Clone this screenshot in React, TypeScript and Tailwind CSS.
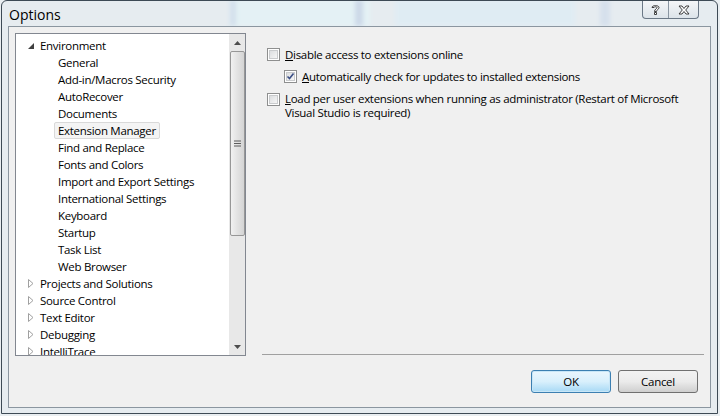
import React from 'react';

const envChildren = [
  'General',
  'Add-in/Macros Security',
  'AutoRecover',
  'Documents',
  'Extension Manager',
  'Find and Replace',
  'Fonts and Colors',
  'Import and Export Settings',
  'International Settings',
  'Keyboard',
  'Startup',
  'Task List',
  'Web Browser',
];

const topLevel = ['Projects and Solutions', 'Source Control', 'Text Editor', 'Debugging', 'IntelliTrace'];

const ExpandedArrow = () => (
  <svg width="6" height="6" viewBox="0 0 6 6" className="block">
    <path d="M6 0 L6 6 L0 6 Z" fill="#404040" />
  </svg>
);

const CollapsedArrow = () => (
  <svg width="6" height="9" viewBox="0 0 6 9" className="block">
    <path d="M0.5 0.5 L5 4.5 L0.5 8.5 Z" fill="#fff" stroke="#a0a0a0" />
  </svg>
);

const CheckBox = ({ checked }: { checked?: boolean }) => (
  <span className="relative flex h-[13px] w-[13px] shrink-0 items-center justify-center border border-[#8e8f8f] bg-white">
    <span className="h-[9px] w-[9px] border border-[#c9cbcd] bg-gradient-to-br from-[#dcdee0] to-[#f6f6f6]" />
    {checked && (
      <svg width="9" height="9" viewBox="0 0 9 9" className="absolute left-[1px] top-[1px]">
        <path d="M1.5 4.5 L3.5 6.5 L7.5 1.5" fill="none" stroke="#3b4f85" strokeWidth="1.6" />
      </svg>
    )}
  </span>
);

const TreeRow = ({ children, indent, arrow, selected }: { children: React.ReactNode; indent: number; arrow?: 'open' | 'closed'; selected?: boolean }) => (
  <div className="flex h-[17px] items-center" style={{ paddingLeft: indent }}>
    {arrow && <span className="mr-[6px] flex w-[6px] items-center">{arrow === 'open' ? <ExpandedArrow /> : <CollapsedArrow />}</span>}
    <span className={selected ? 'ml-[-4px] rounded-[2px] border border-[#d9d9d9] bg-[#f4f4f4] px-[3px] leading-[15px]' : 'leading-[17px]'}>{children}</span>
  </div>
);

const App: React.FC = () => {
  return (
    <div
      className="relative h-[416px] w-[720px] overflow-hidden bg-white text-[11.5px] tracking-[-0.3px] text-black"
      style={{ fontFamily: '"Segoe UI", "Open Sans", Lato, sans-serif' }}
    >
      {/* glass background behind the frame */}
      <div className="absolute inset-0 bg-[#e9eef1]" />
      <div className="absolute left-[230px] top-0 h-[26px] w-[140px] bg-[#e3fbfd] blur-[2px]" />
      <div className="absolute left-[230px] top-0 h-[26px] w-[6px] bg-[#b8cde4] blur-[2px]" />
      <div className="absolute left-[355px] top-0 h-[26px] w-[8px] bg-[#a8bddb] blur-[2px]" />
      <div className="absolute left-[395px] top-0 h-[26px] w-[180px] bg-[#d8eef8] blur-[2px]" />
      <div className="absolute left-[600px] top-0 h-[26px] w-[10px] bg-[#c0d0e6] blur-[2px]" />

      {/* window frame */}
      <div className="relative mx-[1px] flex h-[414px] w-[717px] flex-col rounded-t-[6px] border border-[#3d4a55] bg-[#e4ebf0]/60">
        <div className="flex h-[25px] items-start">
          <span className="ml-[7px] mt-[3px] text-[14px] tracking-normal text-black">Options</span>
          <div className="ml-auto mr-[18px] flex h-[18px] overflow-hidden rounded-b-[4px] border border-t-0 border-[#6b7886] bg-gradient-to-b from-[#f4f6f8] to-[#dde4ea]">
            <span className="flex w-[26px] items-center justify-center border-r border-[#8a96a2]">
              <svg width="9" height="12" viewBox="0 0 9 12">
                <path d="M1 3.5 C1 1 8 1 8 3.5 C8 5.5 5.5 5.5 5.5 7.5 L3.5 7.5 C3.5 5 6 5 6 3.5 C6 2.5 3 2.5 3 3.5 Z M3.5 8.5 H5.5 V10.5 H3.5 Z" fill="#fff" stroke="#2b2b2b" strokeWidth="0.9" />
              </svg>
            </span>
            <span className="flex w-[29px] items-center justify-center">
              <svg width="12" height="10" viewBox="0 0 12 10">
                <path d="M1 1 H4 L6 3.5 L8 1 H11 L7.7 5 L11 9 H8 L6 6.5 L4 9 H1 L4.3 5 Z" fill="#fff" stroke="#2b2b2b" strokeWidth="0.9" />
              </svg>
            </span>
          </div>
        </div>

        {/* client area */}
        <div className="mx-[6px] flex h-[382px] flex-col border border-[#8b96a0] bg-[#f0f0f0] px-[6px] pt-[6px]">
          <div className="flex">
            {/* tree */}
            <div className="relative flex h-[323px] w-[231px] overflow-hidden border border-[#828790] bg-white">
              <div className="flex-1 overflow-hidden pt-[3px]">
                <TreeRow indent={12} arrow="open">Environment</TreeRow>
                {envChildren.map((c) => (
                  <TreeRow key={c} indent={42} selected={c === 'Extension Manager'}>
                    {c}
                  </TreeRow>
                ))}
                {topLevel.map((c) => (
                  <TreeRow key={c} indent={12} arrow="closed">
                    {c}
                  </TreeRow>
                ))}
              </div>
              {/* scrollbar */}
              <div className="flex w-[16px] flex-col items-center bg-[#e8e8e8]">
                <div className="flex h-[17px] w-full items-center justify-center">
                  <svg width="7" height="4" viewBox="0 0 7 4">
                    <path d="M0 4 L3.5 0 L7 4 Z" fill="#4d4d4d" />
                  </svg>
                </div>
                <div className="flex h-[185px] w-[15px] items-center justify-center rounded-[2px] border border-[#979797] bg-gradient-to-r from-[#f1f1f1] via-[#e2e2e2] to-[#d4d4d4]">
                  <svg width="7" height="7" viewBox="0 0 7 7">
                    <path d="M0 1 H7 M0 3.5 H7 M0 6 H7" stroke="#5d5d5d" strokeWidth="1" />
                  </svg>
                </div>
                <div className="flex-1" />
                <div className="flex h-[17px] w-full items-center justify-center">
                  <svg width="7" height="4" viewBox="0 0 7 4">
                    <path d="M0 0 L3.5 4 L7 0 Z" fill="#4d4d4d" />
                  </svg>
                </div>
              </div>
            </div>

            {/* options */}
            <div className="ml-[16px] flex h-[322px] flex-1 flex-col border-b border-[#a0a0a0] pl-[5px] pt-[13px]">
              <label className="flex items-center gap-[5px]">
                <CheckBox />
                <span className="first-letter:underline">Disable access to extensions online</span>
              </label>
              <label className="mt-[5px] flex items-center gap-[5px] pl-[17px]">
                <CheckBox checked />
                <span className="first-letter:underline">Automatically check for updates to installed extensions</span>
              </label>
              <label className="mt-[6px] flex items-start gap-[5px]">
                <span className="mt-[1px]">
                  <CheckBox />
                </span>
                <span className="w-[405px] leading-[14px] first-letter:underline">
                  Load per user extensions when running as administrator (Restart of Microsoft Visual Studio is required)
                </span>
              </label>
            </div>
          </div>

          {/* buttons */}
          <div className="mr-[6px] mt-[14px] flex justify-end gap-[7px]">
            <button className="h-[23px] w-[80px] rounded-[3px] border border-[#3c7fb1] bg-gradient-to-b from-[#eaf6fd] via-[#d9f0fc] to-[#a7d9f5] shadow-[inset_0_0_0_1px_#c8e6f7]">
              OK
            </button>
            <button className="h-[23px] w-[80px] rounded-[3px] border border-[#707070] bg-gradient-to-b from-[#f2f2f2] via-[#ebebeb] to-[#cfcfcf]">
              Cancel
            </button>
          </div>
        </div>
      </div>
    </div>
  );
};

export default App;
